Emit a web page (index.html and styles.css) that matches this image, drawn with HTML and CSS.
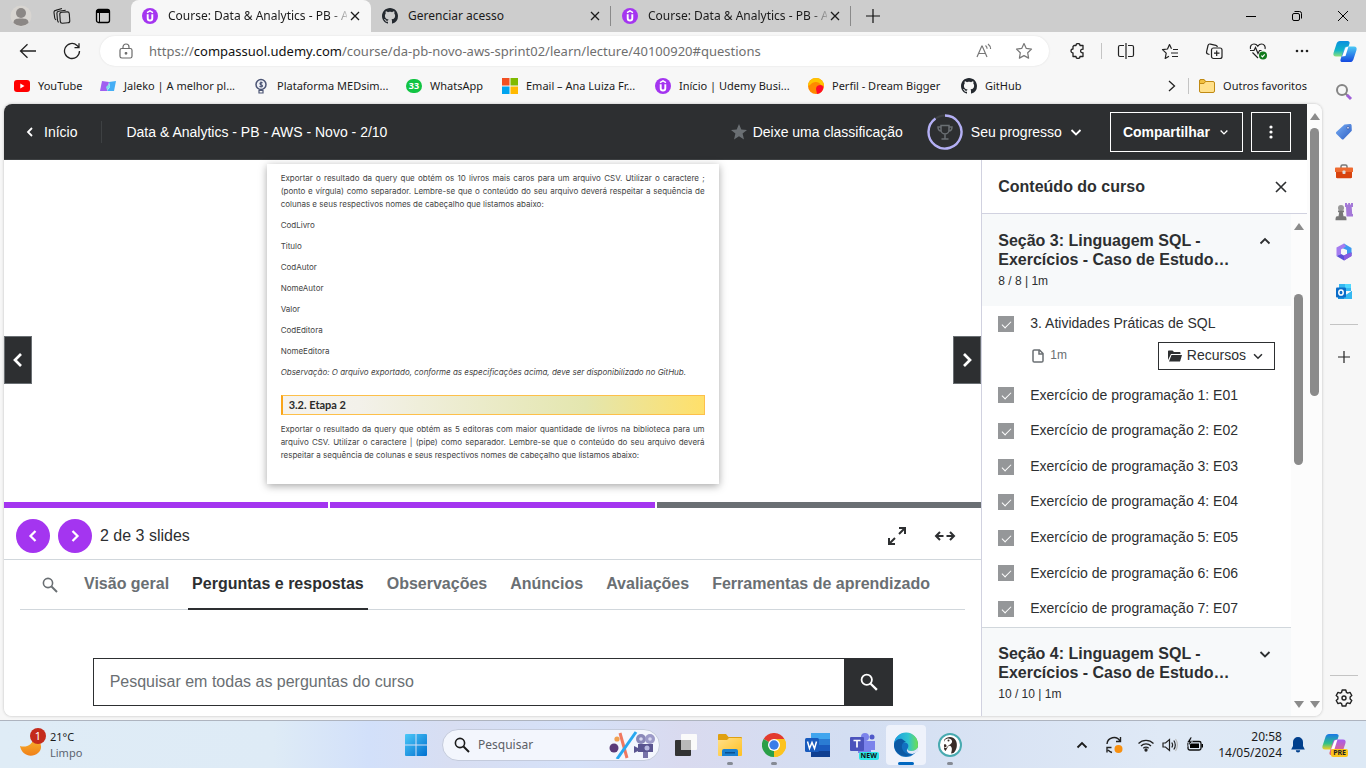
FILE: index.html
```html
<!DOCTYPE html>
<html lang="pt-BR">
<head>
<meta charset="utf-8">
<title>Course: Data &amp; Analytics - PB - AWS</title>
<link rel="stylesheet" href="styles.css">
</head>
<body>
<svg class="defs" aria-hidden="true">
  <defs>
    <linearGradient id="g-win" x1="0" y1="0" x2="1" y2="1"><stop offset="0" stop-color="#4cc8f8"/><stop offset="1" stop-color="#0070d0"/></linearGradient>
    <linearGradient id="g-cop1" x1="0" y1="0" x2="0" y2="1"><stop offset="0" stop-color="#0a8fe0"/><stop offset=".6" stop-color="#10b5c8"/><stop offset="1" stop-color="#8fe07a"/></linearGradient>
    <linearGradient id="g-cop2" x1="0" y1="0" x2="0" y2="1"><stop offset="0" stop-color="#4cc9f5"/><stop offset="1" stop-color="#1348e0"/></linearGradient>
    <linearGradient id="g-cop3" x1="0" y1="0" x2="0" y2="1"><stop offset="0" stop-color="#1a78e8"/><stop offset=".6" stop-color="#2fc08a"/><stop offset="1" stop-color="#f5d020"/></linearGradient>
    <linearGradient id="g-cop4" x1="0" y1="0" x2="0" y2="1"><stop offset="0" stop-color="#a65cf0"/><stop offset="1" stop-color="#f06a6a"/></linearGradient>
    <linearGradient id="g-tag" x1="0" y1="0" x2="1" y2="1"><stop offset="0" stop-color="#78aef5"/><stop offset="1" stop-color="#2f5fc4"/></linearGradient>
    <linearGradient id="g-edge" x1="0" y1="0" x2="1" y2="0"><stop offset="0" stop-color="#1a9be0"/><stop offset=".6" stop-color="#30c4d0"/><stop offset="1" stop-color="#6fe04e"/></linearGradient>
    <linearGradient id="g-moon" x1="0" y1="0" x2="0" y2="1"><stop offset="0" stop-color="#f8b830"/><stop offset="1" stop-color="#f08018"/></linearGradient>
    <linearGradient id="g-fold" x1="0" y1="0" x2="1" y2="1"><stop offset="0" stop-color="#ffe08a"/><stop offset="1" stop-color="#ffc020"/></linearGradient>
    <symbol id="i-udemy" viewBox="0 0 16 16"><circle cx="8" cy="8" r="8" fill="#a435f0"/><path d="M5 4.600 8 2.900l3 1.700" fill="none" stroke="#fff" stroke-width="1.500"/><path d="M5.700 6.300v3.900a2.300 2.300 0 0 0 4.600 0V6.300" fill="none" stroke="#fff" stroke-width="1.900"/></symbol>
    <symbol id="i-github" viewBox="0 0 16 16"><path fill="#24292f" d="M8 0C3.58 0 0 3.58 0 8c0 3.54 2.29 6.53 5.47 7.59.4.07.55-.17.55-.38 0-.19-.01-.82-.01-1.49-2.01.37-2.53-.49-2.69-.94-.09-.23-.48-.94-.82-1.13-.28-.15-.68-.52-.01-.53.63-.01 1.08.58 1.23.82.72 1.21 1.87.87 2.33.66.07-.52.28-.87.51-1.07-1.78-.2-3.64-.89-3.64-3.95 0-.87.31-1.59.82-2.15-.08-.2-.36-1.02.08-2.12 0 0 .67-.21 2.2.82.64-.18 1.32-.27 2-.27s1.36.09 2 .27c1.53-1.04 2.2-.82 2.2-.82.44 1.1.16 1.92.08 2.12.51.56.82 1.27.82 2.15 0 3.07-1.87 3.75-3.65 3.95.29.25.54.73.54 1.48 0 1.07-.01 1.93-.01 2.2 0 .21.15.46.55.38A8.01 8.01 0 0 0 16 8c0-4.42-3.58-8-8-8z"/></symbol>
    <symbol id="i-x" viewBox="0 0 16 16"><path d="m4 4 8 8m0-8-8 8" fill="none" stroke="currentColor" stroke-width="1.3"/></symbol>
    <symbol id="i-down" viewBox="0 0 16 16"><path d="m3.500 6 4.500 4.500L12.500 6" fill="none" stroke="currentColor" stroke-width="1.8"/></symbol>
    <symbol id="i-up" viewBox="0 0 16 16"><path d="m3.500 10.500 4.500-4.500 4.500 4.500" fill="none" stroke="currentColor" stroke-width="1.8"/></symbol>
    <symbol id="i-left" viewBox="0 0 16 16"><path d="M10 4 6 8l4 4" fill="none" stroke="currentColor" stroke-width="1.8"/></symbol>
    <symbol id="i-right" viewBox="0 0 16 16"><path d="m6 4 4 4-4 4" fill="none" stroke="currentColor" stroke-width="1.8"/></symbol>
    <symbol id="i-search" viewBox="0 0 16 16"><circle cx="6" cy="6" r="4.600" fill="none" stroke="currentColor" stroke-width="1.6"/><path d="m9.500 9.500 5.500 5.500" stroke="currentColor" stroke-width="2"/></symbol>
  </defs>
</svg>

<div class="tabstrip">
  <div class="tabstrip-tools">
    <button class="tool" aria-label="Perfil"><svg width="22" height="22" viewBox="0 0 22 22"><circle cx="11" cy="11" r="10.500" fill="#d8d5d1"/><circle cx="11" cy="8" r="5" fill="#8b8785"/><path d="M3.500 18c0-4 3-4.500 7.500-4.500s7.500.5 7.500 4.500a11 11 0 0 1-15 0z" fill="#8b8785"/></svg></button>
    <button class="tool" aria-label="Workspaces"><svg width="18" height="18" viewBox="0 0 18 18" fill="none" stroke="#1b1b1b" stroke-width="1.100"><rect x="7" y="5" width="9.500" height="11" rx="2" transform="rotate(-4 12 10)"/><path d="M4.500 13.500 3.900 6.300a2 2 0 0 1 1.800-2.100l7-.9M1.800 11.500 1 5.700A2 2 0 0 1 2.700 3.400L9 1.500M5.500 15.500l-1-2M3 13l-1.200-1.500"/></svg></button>
    <button class="tool" aria-label="Guias verticais"><svg width="16" height="16" viewBox="0 0 16 16"><rect x="1.500" y="1.500" width="13" height="13" rx="2" fill="none" stroke="#000" stroke-width="1.300"/><path d="M1.500 2h13v3h-13z"/><path d="M4.500 5v9.500" stroke="#000"/></svg></button>
  </div>
  <div class="tab tab-active">
    <svg class="ico16"><use href="#i-udemy"/></svg><span class="tab-title tab-fade">Course: Data &amp; Analytics - PB - A</span>
    <button class="tab-close" aria-label="Fechar guia"><svg class="ico16"><use href="#i-x"/></svg></button>
  </div>
  <div class="tab">
    <svg class="ico16"><use href="#i-github"/></svg><span class="tab-title">Gerenciar acesso</span>
    <button class="tab-close" aria-label="Fechar guia"><svg class="ico16"><use href="#i-x"/></svg></button>
  </div>
  <div class="tab">
    <svg class="ico16"><use href="#i-udemy"/></svg><span class="tab-title tab-fade">Course: Data &amp; Analytics - PB - A</span>
    <button class="tab-close" aria-label="Fechar guia"><svg class="ico16"><use href="#i-x"/></svg></button>
  </div>
  <button class="tool" aria-label="Nova guia"><svg width="16" height="16" viewBox="0 0 16 16"><path d="M8 1v14M1 8h14" stroke="#111" stroke-width="1.200"/></svg></button>
  <div class="win-controls">
    <button class="win-btn" aria-label="Minimizar"><svg width="12" height="12" viewBox="0 0 12 12"><path d="M1 6.500h10" stroke="#000"/></svg></button>
    <button class="win-btn" aria-label="Restaurar"><svg width="12" height="12" viewBox="0 0 12 12" fill="none" stroke="#000"><rect x="1.500" y="3.500" width="7" height="7" rx="1.500"/><path d="M3.500 1.500h5a2 2 0 0 1 2 2v5"/></svg></button>
    <button class="win-btn" aria-label="Fechar"><svg width="12" height="12" viewBox="0 0 12 12"><path d="m1 1 10 10m0-10L1 11" stroke="#000"/></svg></button>
  </div>
</div>

<div class="toolbar">
  <button class="tool" aria-label="Voltar"><svg width="18" height="16" viewBox="0 0 18 16" fill="none" stroke="#222" stroke-width="1.300"><path d="M17 8H2M8.500 1.200 1.500 8l7 6.800"/></svg></button>
  <button class="tool" aria-label="Atualizar"><svg width="18" height="18" viewBox="0 0 18 18" fill="none" stroke="#222" stroke-width="1.300"><path d="M16.500 9A7.500 7.500 0 1 1 14 3.400L16 5.500M16 1.200v4.500h-4.500"/></svg></button>
  <div class="address">
    <svg width="14" height="16" viewBox="0 0 14 16" fill="none" stroke="#6b6b6b" stroke-width="1.200"><rect x="1" y="5.500" width="12" height="9.500" rx="1.800"/><path d="M4 5.500V4a3 3 0 0 1 6 0v1.500"/><circle cx="7" cy="10.300" r=".8" fill="#6b6b6b"/></svg>
    <div class="url" role="textbox" aria-label="Endereço">https://<b>compassuol.udemy.com</b>/course/da-pb-novo-aws-sprint02/learn/lecture/40100920#questions</div>
    <button class="addr-btn" aria-label="Ler em voz alta"><svg width="16" height="16" viewBox="0 0 16 16" fill="none" stroke="#777" stroke-width="1.200"><path d="m1 14 4.800-11h.4L11 14M2.800 10.500h6.400M9.500 2.500c1 .8 1.600 1.900 1.600 3.200M12 1c1.600 1.200 2.600 3 2.600 5"/></svg></button>
    <button class="addr-btn" aria-label="Adicionar aos favoritos"><svg width="18" height="18" viewBox="0 0 18 18" fill="none" stroke="#777" stroke-width="1.200" stroke-linejoin="round"><path d="m9 1.500 2.300 4.900 5.200.7-3.800 3.700.9 5.300L9 13.600l-4.600 2.500.9-5.300L1.500 7.100l5.200-.7z"/></svg></button>
  </div>
  <button class="tool" aria-label="Extensões"><svg width="16" height="16" viewBox="0 0 16 16" fill="none" stroke="#222" stroke-width="1.300" stroke-linejoin="round"><path d="M5 2.500h2a2 2 0 0 1 4 0h3v3.800a1.800 1.800 0 1 0 0 3.400v3.800h-3a2 2 0 0 1-4 0H4V10a2 2 0 1 1 0-4V3.500z"/></svg></button>
  <i class="tool-sep"></i>
  <button class="tool" aria-label="Tela dividida"><svg width="18" height="16" viewBox="0 0 18 16" fill="none" stroke="#222" stroke-width="1.200"><path d="M7 2.500H3a1.500 1.500 0 0 0-1.500 1.500v8A1.500 1.500 0 0 0 3 13.500h4M11 2.500h4A1.500 1.500 0 0 1 16.500 4v8a1.500 1.500 0 0 1-1.500 1.500h-4M9 0v16"/></svg></button>
  <button class="tool" aria-label="Favoritos"><svg width="18" height="17" viewBox="0 0 18 17" fill="none" stroke="#222" stroke-width="1.200" stroke-linejoin="round"><path d="M10.500 5.800 8.500 1.500l-2 4.500L1.500 6.600l3.700 3.500-1 5.400 3.800-2.300M12 6.500h5M10 10h7M11 13.500h6"/></svg></button>
  <button class="tool" aria-label="Coleções"><svg width="18" height="18" viewBox="0 0 18 18" fill="none" stroke="#222" stroke-width="1.200"><rect x="6.500" y="6" width="10.500" height="10.500" rx="2"/><path d="M11.700 8.500v5.500M9 11.200h5.500M4.500 12.500 3 12a2 2 0 0 1-1.400-2.400L3 3.500a2 2 0 0 1 2.400-1.400l5.500 1.300a2 2 0 0 1 1.500 1.600"/></svg></button>
  <button class="tool" aria-label="Desempenho"><svg width="18" height="18" viewBox="0 0 18 18" fill="none" stroke="#222" stroke-width="1.200"><path d="M1.500 7C.8 4 2.500 2 5 2c1.800 0 3 1 3.800 2.200C9.600 3 10.800 2 12.600 2c2.600 0 4.200 2.500 3.400 5M1 8.500h4l1.500-3 2.500 6 1.500-3h2M3.500 10.500 9 16"/><circle cx="14" cy="13.500" r="4" fill="#117a1c" stroke="none"/><path d="m12.300 13.600 1.200 1.200 2.200-2.400" stroke="#fff"/></svg></button>
  <button class="tool" aria-label="Mais"><svg width="14" height="4" viewBox="0 0 14 4" fill="#222"><circle cx="2" cy="2" r="1.300"/><circle cx="7" cy="2" r="1.300"/><circle cx="12" cy="2" r="1.300"/></svg></button>
  <button class="tool" aria-label="Copilot"><svg width="24" height="23" viewBox="0 0 24 23"><path d="M7 1h7.500c1.500 0 2.500 1 2 2.600L13 14c-.5 1.700-1.500 2.500-3 2.500H3C.7 16.500 0 15 .5 13L3.600 3.600C4.200 2 5.300 1 7 1z" fill="url(#g-cop1)"/><path d="M17 22H9.500c-1.500 0-2.500-1-2-2.600L11 9c.5-1.700 1.500-2.500 3-2.500h7c2.300 0 3 1.500 2.500 3.500l-3.100 9.400C19.800 21 18.700 22 17 22z" fill="url(#g-cop2)"/><path d="m12.500 7.500 3-1-3 9.500-3.500.5z" fill="#fff"/></svg></button>
</div>

<div class="browser">
  <div class="browser-main">
    <nav class="bookmarks" aria-label="Favoritos">
      <a class="bm" href="#"><svg class="ico16" viewBox="0 0 16 16"><rect y="2" width="16" height="12" rx="3" fill="#f00"/><path d="m6.300 5.500 4.200 2.500-4.200 2.500z" fill="#fff"/></svg><span>YouTube</span></a>
      <a class="bm bm-long" href="#"><svg class="ico16" viewBox="0 0 16 16"><path d="m2 3 7 1-2 9-7 0z" fill="#a05ff0"/><path d="m9 4 7-1-2 10-7 0 3-4z" fill="#45aef5"/><path d="m6 9 3-3 1 3-3 3z" fill="#7de0e8"/></svg><span>Jaleko | A melhor pl...</span></a>
      <a class="bm bm-long" href="#"><svg class="ico16" viewBox="0 0 16 16"><circle cx="8" cy="6.500" r="5" fill="#eef0f6" stroke="#4c5575" stroke-width="1.500"/><path d="M9.500 5C8 3.800 6.300 5 7.300 6.200c.8.700 2.200.6 2.200 1.800-.2 1.300-2 1-3 .2M8 3.500v6M6 12.500h4v2.500H6z" fill="none" stroke="#4c5575" stroke-width="1.200"/></svg><span>Plataforma MEDsim...</span></a>
      <a class="bm bm-mid" href="#"><span class="wa">33</span><span>WhatsApp</span></a>
      <a class="bm bm-long" href="#"><svg class="ico16" viewBox="0 0 16 16"><path d="M0 0h7.500v7.500H0z" fill="#f25022"/><path d="M8.500 0H16v7.500H8.500z" fill="#7fba00"/><path d="M0 8.500h7.500V16H0z" fill="#00a4ef"/><path d="M8.500 8.500H16V16H8.500z" fill="#ffb900"/></svg><span>Email – Ana Luiza Fr...</span></a>
      <a class="bm bm-long" href="#"><svg class="ico16"><use href="#i-udemy"/></svg><span>Início | Udemy Busi...</span></a>
      <a class="bm bm-long" href="#"><svg class="ico16" viewBox="0 0 16 16"><circle cx="8" cy="8" r="8" fill="#ff8a00"/><path d="M0 8a8 8 0 0 1 16 0c-1-1-2-1-3-1-2-4-8-4-11 0z" fill="#ffc400"/><path d="M8 11a4 4 0 0 1 7.400-2A8 8 0 0 1 9 16z" fill="#ff0a2a"/></svg><span>Perfil - Dream Bigger</span></a>
      <a class="bm" href="#"><svg class="ico16"><use href="#i-github"/></svg><span>GitHub</span></a>
      <button class="bm-more" aria-label="Mais favoritos"><svg width="8" height="12" viewBox="0 0 8 12"><path d="m1 1 5.500 5L1 11" fill="none" stroke="#222" stroke-width="1.300"/></svg></button>
      <i class="tool-sep"></i>
      <a class="bm" href="#"><svg class="ico16" viewBox="0 0 16 16"><path d="M.5 3A1.500 1.500 0 0 1 2 1.500h3l1.500 2H14A1.500 1.500 0 0 1 15.500 5v8a1.500 1.500 0 0 1-1.500 1.500H2A1.500 1.500 0 0 1 .5 13z" fill="#ffe08a" stroke="#c08a14"/><path d="M.5 5.500V3A1.500 1.500 0 0 1 2 1.500h3l1.500 2-1.500 2z" fill="#f2c040" stroke="#c08a14"/></svg><span>Outros favoritos</span></a>
    </nav>

    <div class="viewport">
      <div class="page">
        <header class="course-head">
          <a class="home" href="#"><svg class="ico16"><use href="#i-left"/></svg>Início</a>
          <h1 class="course-title">Data &amp; Analytics - PB - AWS - Novo - 2/10</h1>
          <button class="head-link rate"><svg class="ico16" viewBox="0 0 16 16"><path d="m8 0 2.300 5.500 5.700.4-4.400 3.700L13 15.500l-5-3.200-5 3.200 1.400-5.900L0 5.900l5.700-.4z" fill="#6a6f73"/></svg>Deixe uma classificação</button>
          <button class="head-link progress-btn">
            <svg width="36" height="36" viewBox="0 0 36 36" fill="none"><circle cx="18" cy="18" r="16.500" stroke="#3e4143" stroke-width="2"/><path d="M18 1.500A16.500 16.500 0 1 1 8.500 4.500" stroke="#b4b0f5" stroke-width="2.400"/><path d="M14 11.500h8v4.500a4 4 0 0 1-8 0zM14 13h-3c0 2.500 1 4 3.500 4.300M22 13h3c0 2.500-1 4-3.500 4.300M18 20.500V25M14.500 25h7" stroke="#6a6f73" stroke-width="1.500"/></svg>
            Seu progresso<svg class="ico16 chev"><use href="#i-down"/></svg>
          </button>
          <button class="outline-btn">Compartilhar<svg class="ico12"><use href="#i-down"/></svg></button>
          <button class="outline-btn square" aria-label="Mais opções"><svg width="4" height="14" viewBox="0 0 4 14" fill="#fff"><circle cx="2" cy="2" r="1.600"/><circle cx="2" cy="7" r="1.600"/><circle cx="2" cy="12" r="1.600"/></svg></button>
        </header>

        <div class="columns">
          <main class="lesson">
            <section class="stage">
              <article class="slide">
                <p><span class="full">Exportar o resultado da query que obtém os 10 livros mais caros para um arquivo CSV. Utilizar o caractere ;</span> <span class="full">(ponto e vírgula) como separador. Lembre-se que o conteúdo do seu arquivo deverá respeitar a sequência de</span> colunas e seus respectivos nomes de cabeçalho que listamos abaixo:</p>
                <p>CodLivro</p>
                <p>Titulo</p>
                <p>CodAutor</p>
                <p>NomeAutor</p>
                <p>Valor</p>
                <p>CodEditora</p>
                <p>NomeEditora</p>
                <p><em>Observação: O arquivo exportado, conforme as especificações acima, deve ser disponibilizado no GitHub.</em></p>
                <h2>3.2. Etapa 2</h2>
                <p><span class="full">Exportar o resultado da query que obtém as 5 editoras com maior quantidade de livros na biblioteca para um</span> <span class="full">arquivo CSV. Utilizar o caractere | (pipe) como separador. Lembre-se que o conteúdo do seu arquivo deverá</span> respeitar a sequência de colunas e seus respectivos nomes de cabeçalho que listamos abaixo:</p>
              </article>
              <button class="stage-nav prev" aria-label="Aula anterior"><svg class="ico24"><use href="#i-left"/></svg></button>
              <button class="stage-nav next" aria-label="Próxima aula"><svg class="ico24"><use href="#i-right"/></svg></button>
            </section>
            <div class="steps"><i class="done"></i><i class="done"></i><i></i></div>
            <div class="slide-controls">
              <button class="round" aria-label="Slide anterior"><svg class="ico20"><use href="#i-left"/></svg></button>
              <button class="round" aria-label="Próximo slide"><svg class="ico20"><use href="#i-right"/></svg></button>
              <span class="count">2 de 3 slides</span>
              <button class="plain" aria-label="Tela cheia"><svg width="20" height="20" viewBox="0 0 20 20" fill="none" stroke="#2d2f31" stroke-width="2"><path d="M12 2h6v6M17.500 2.500 12 8M2 12v6h6M2.500 17.500 8 12"/></svg></button>
              <button class="plain" aria-label="Expandir visualização"><svg width="22" height="12" viewBox="0 0 22 12" fill="none" stroke="#2d2f31" stroke-width="2"><path d="M9.500 6H2M6 2 2 6l4 4M12.500 6H20M16 2l4 4-4 4"/></svg></button>
            </div>
            <nav class="tabs" aria-label="Seções do curso">
              <button class="tabs-search" aria-label="Pesquisar"><svg class="ico16"><use href="#i-search"/></svg></button>
              <button class="tabs-item">Visão geral</button>
              <button class="tabs-item current">Perguntas e respostas</button>
              <button class="tabs-item">Observações</button>
              <button class="tabs-item">Anúncios</button>
              <button class="tabs-item">Avaliações</button>
              <button class="tabs-item">Ferramentas de aprendizado</button>
            </nav>
            <form class="ask">
              <input type="search" aria-label="Pesquisar perguntas" placeholder="Pesquisar em todas as perguntas do curso">
              <button type="button" aria-label="Enviar pesquisa"><svg class="ico18"><use href="#i-search"/></svg></button>
            </form>
          </main>

          <aside class="contents">
            <div class="contents-head"><h2>Conteúdo do curso</h2><button class="plain" aria-label="Fechar"><svg class="ico20"><use href="#i-x"/></svg></button></div>
            <div class="contents-body">
              <div class="contents-list">
                <button class="section-head"><span class="section-name">Seção 3: Linguagem SQL - Exercícios - Caso de Estudo…</span><svg class="ico16"><use href="#i-up"/></svg><span class="section-meta">8 / 8 | 1m</span></button>
                <ul class="lectures">
                  <li><input type="checkbox" id="l0" checked><label for="l0">3. Atividades Práticas de SQL</label>
                    <div class="lecture-meta"><svg width="12" height="14" viewBox="0 0 12 14" fill="none" stroke="#6a6f73" stroke-width="1.500"><path d="M7.500 1H2.300A1.300 1.300 0 0 0 1 2.300v9.400A1.300 1.300 0 0 0 2.300 13h7.400a1.300 1.300 0 0 0 1.300-1.300V4.500zM7 1v4h4"/></svg><span>1m</span>
                      <button class="resources"><svg width="14" height="12" viewBox="0 0 14 12"><path d="M0 10V1.500C0 .7.500.5 1 .5h3.500L6 2h5.500c.6 0 1 .4 1 1v1H3z" fill="#2d2f31"/><path d="M3.500 5H14l-1.800 6c-.1.400-.4.500-.8.500H1z" fill="#2d2f31"/></svg>Recursos<svg class="ico14"><use href="#i-down"/></svg></button></div></li>
                  <li><input type="checkbox" id="l1" checked><label for="l1">Exercício de programação 1: E01</label></li>
                  <li><input type="checkbox" id="l2" checked><label for="l2">Exercício de programação 2: E02</label></li>
                  <li><input type="checkbox" id="l3" checked><label for="l3">Exercício de programação 3: E03</label></li>
                  <li><input type="checkbox" id="l4" checked><label for="l4">Exercício de programação 4: E04</label></li>
                  <li><input type="checkbox" id="l5" checked><label for="l5">Exercício de programação 5: E05</label></li>
                  <li><input type="checkbox" id="l6" checked><label for="l6">Exercício de programação 6: E06</label></li>
                  <li><input type="checkbox" id="l7" checked><label for="l7">Exercício de programação 7: E07</label></li>
                </ul>
                <button class="section-head"><span class="section-name">Seção 4: Linguagem SQL - Exercícios - Caso de Estudo…</span><svg class="ico16"><use href="#i-down"/></svg><span class="section-meta">10 / 10 | 1m</span></button>
              </div>
              <div class="scroll scroll-list"><i class="arrow up"></i><i class="before"></i><i class="thumb"></i><i class="after"></i><i class="arrow down"></i></div>
            </div>
          </aside>
        </div>
      </div>
      <div class="scroll scroll-page"><i class="arrow up"></i><i class="thumb"></i><i class="after"></i><i class="arrow down"></i></div>
    </div>
  </div>

  <aside class="edge-side">
    <button aria-label="Pesquisar"><svg width="18" height="18" viewBox="0 0 18 18" fill="none"><circle cx="7" cy="7" r="5" stroke="#858585" stroke-width="2"/><path d="m10.500 10.500 2 2" stroke="#858585" stroke-width="2"/><path d="m12 12 4 4" stroke="#a060d8" stroke-width="3"/></svg></button>
    <button aria-label="Compras"><svg width="18" height="18" viewBox="0 0 18 18"><path d="M9.500 1.500 15 1c1 0 1.500.5 1.600 1.500l.2 5.200-8 8.300c-.7.700-1.500.7-2.200 0L1.500 11c-.7-.7-.7-1.500 0-2.200z" fill="url(#g-tag)"/><circle cx="13" cy="4.800" r="1.300" fill="#eef" stroke="#2a50a0" stroke-width=".7"/></svg></button>
    <button aria-label="Ferramentas"><svg width="18" height="16" viewBox="0 0 18 16"><path d="M6 4V2.500C6 1.500 6.500 1 7.500 1h3c1 0 1.500.5 1.500 1.500V4" fill="none" stroke="#777" stroke-width="1.500"/><path d="M1 3.500h16c.6 0 1 .4 1 1V8H0V4.500c0-.6.400-1 1-1z" fill="#ee6a30"/><path d="M1 8h16v5c0 .8-.4 1.200-1.200 1.200H2.200c-.8 0-1.200-.4-1.200-1.200z" fill="#d8430e"/><rect x="7.500" y="6.500" width="3" height="3.500" rx=".8" fill="#ddd"/></svg></button>
    <button aria-label="Jogos"><svg width="18" height="18" viewBox="0 0 18 18"><path d="M10 0h2v1.500h1.200V0h1.800v1.500h1V0h2v4h-1.300l.5 7H18v2.500h-6.500L11 4h-1z" fill="#a478d8"/><circle cx="6" cy="5" r="3" fill="#999"/><path d="M3 7.500h6v1.800H7.800l.7 4H10c1 0 1.500 1 1.500 4H.5c0-3 .5-4 1.500-4h1.500l.7-4H3z" fill="#777"/></svg></button>
    <button aria-label="Microsoft 365"><svg width="18" height="18" viewBox="0 0 18 18"><path d="m9 .500 7.500 4.500v6L12 12V7L7 5z" fill="#3b9af0"/><path d="M9 .500 1.500 4.500v8.500L6 11V6.500l5-3z" fill="#a57cf0"/><path d="m1.500 13 7.500 4.500 7.500-4.500V9.500L12 11l-3 1.500L6 11z" fill="#5a4fd8"/><path d="m9 12.500 3-1.500 4.500-1.500V13L9 17.500z" fill="#8a5ce0"/></svg></button>
    <button aria-label="Outlook"><svg width="18" height="18" viewBox="0 0 18 18"><path d="M4 1h12v7H4z" fill="#35b8f1"/><path d="M10 1h6v4h-6z" fill="#50d9ff"/><path d="M3 8l7 5 7-5v8H3z" fill="#1490df"/><path d="m9 13 8-5v8H9z" fill="#35b8f1"/><rect x="1" y="4.500" width="10" height="10" rx="1" fill="#0a6cc8"/><ellipse cx="6" cy="9.500" rx="2.200" ry="2.600" fill="none" stroke="#fff" stroke-width="1.500"/></svg></button>
    <hr>
    <button aria-label="Adicionar"><svg width="14" height="14" viewBox="0 0 14 14"><path d="M7 1v12M1 7h12" stroke="#222" stroke-width="1.200"/></svg></button>
    <hr class="push">
    <button aria-label="Configurações"><svg width="18" height="18" viewBox="0 0 18 18" fill="none" stroke="#222" stroke-width="1.400" stroke-linejoin="round"><path d="M7.200 1h3.600l.6 2.300 1.300.8 2.300-.7 1.800 3.100L15.100 8v2l1.700 1.500-1.800 3.100-2.300-.7-1.300.8-.6 2.300H7.200l-.6-2.300-1.300-.8-2.300.7-1.800-3.100L2.900 10V8L1.200 6.500 3 3.400l2.300.7 1.300-.8z"/><circle cx="9" cy="9" r="2"/></svg></button>
  </aside>
</div>

<footer class="taskbar">
  <button class="weather">
    <span class="moon"><svg width="24" height="24" viewBox="0 0 24 24"><path d="M1 13c6 2 13-1 14-9 8 4 9 12 4 16-6 5-16 3-18-7z" fill="url(#g-moon)"/></svg><b>1</b></span>
    <span class="weather-text">21°C<small>Limpo</small></span>
  </button>
  <div class="apps">
    <button class="app" aria-label="Iniciar"><svg width="24" height="24" viewBox="0 0 24 24" fill="url(#g-win)"><path d="M1 2a1 1 0 0 1 1-1h9.500v10.500H1zM12.500 1H22a1 1 0 0 1 1 1v9.500H12.500zM1 12.500h10.500V23H2a1 1 0 0 1-1-1zM12.500 12.500H23V22a1 1 0 0 1-1 1h-9.500z"/></svg></button>
    <label class="os-search"><svg class="ico16"><use href="#i-search"/></svg><input type="text" aria-label="Pesquisar no Windows" placeholder="Pesquisar">
      <svg width="46" height="28" viewBox="0 0 46 28"><circle cx="5" cy="17" r="4.500" fill="#5a3a78"/><circle cx="8" cy="8" r="2.600" fill="#f0a050"/><path d="m11 2 7 25" stroke="#f07860" stroke-width="3"/><path d="M27 1 8 28" stroke="#28a8f0" stroke-width="3"/><circle cx="32" cy="8" r="5" fill="#8a88b8"/><circle cx="41" cy="8" r="5" fill="#9c9ac8"/><circle cx="32" cy="8" r="1.800" fill="#d8d8f0"/><circle cx="41" cy="8" r="1.800" fill="#d8d8f0"/><path d="M29 13h15v8H29zM25 15l4 2v3l-4 2z" fill="#5a5590"/><path d="M34 21h5v6h-5z" fill="#7773a8"/><circle cx="38" cy="17" r="2.500" fill="#b8b8e0"/></svg></label>
    <button class="app" aria-label="Visão de tarefas"><svg width="24" height="24" viewBox="0 0 24 24"><rect x="7" y="1" width="16" height="16" rx="1" fill="#fafafa"/><rect x="1" y="7" width="16" height="16" rx="1" fill="#333"/><path d="M7 7h10v10H7z" fill="#b8b8b8"/></svg></button>
    <button class="app open" aria-label="Explorador de Arquivos"><svg width="26" height="24" viewBox="0 0 26 24"><path d="M1 2a1 1 0 0 1 1-1h7l2.500 3H24a1 1 0 0 1 1 1v4H1z" fill="#e0a010"/><path d="M1 7h9l2-2h12a1 1 0 0 1 1 1v16a1 1 0 0 1-1 1H2a1 1 0 0 1-1-1z" fill="url(#g-fold)"/><path d="M5 23v-5a2 2 0 0 1 2-2h12a2 2 0 0 1 2 2v5z" fill="#1a80d0"/><path d="M8 19h10v1.500H8z" fill="#0a5090"/></svg></button>
    <button class="app open" aria-label="Chrome"><svg width="24" height="24" viewBox="0 0 24 24"><path d="M12 12 1.600 6A12 12 0 0 1 22.400 6z" fill="#e33b2e"/><path d="M12 12 22.400 6A12 12 0 0 1 12 24z" fill="#fcc31e"/><path d="M12 12v12A12 12 0 0 1 1.600 6z" fill="#2a9f48"/><path d="M12 6h10.400A12 12 0 0 1 12 24l5.200-9z" fill="#fcc31e"/><circle cx="12" cy="12" r="6" fill="#fff"/><circle cx="12" cy="12" r="4.700" fill="#3b7de8"/></svg></button>
    <button class="app" aria-label="Word"><svg width="26" height="24" viewBox="0 0 26 24"><rect x="6" width="19" height="24" rx="1.500" fill="#1b5bbe"/><path d="M6 0h19v6H6z" fill="#41a5ee"/><path d="M6 6h19v6H6z" fill="#2b7cd3"/><path d="M6 18h19v6H6z" fill="#103f91"/><rect y="5" width="14" height="14" rx="1.500" fill="#185abd"/><path d="m2.500 8.500 2 7 2.500-6 2.500 6 2-7" fill="none" stroke="#fff" stroke-width="1.500"/></svg></button>
    <button class="app" aria-label="Teams"><svg width="26" height="26" viewBox="0 0 26 26"><circle cx="16" cy="5" r="4" fill="#7b83eb"/><circle cx="23" cy="5" r="2.500" fill="#5059c9"/><path d="M9 9h13v12H9zM22 9h4v9h-4z" fill="#7b83eb"/><rect x="1" y="5" width="14" height="14" rx="1" fill="#4b53bc"/><path d="M4.500 8.500h7M8 8.500v7" stroke="#fff" stroke-width="1.700"/></svg><span class="new">NEW</span></button>
    <button class="app active" aria-label="Edge"><svg width="26" height="26" viewBox="0 0 26 26"><circle cx="13" cy="13" r="12" fill="#1270c0"/><path d="M1 12A12 12 0 0 1 25 13c0 4-3 6-6.500 6-3 0-4.500-1-4-2.500 2-2.500.5-6-3-6S1 8 1 12z" fill="url(#g-edge)"/><path d="M13 10c-4 0-5 4-3.500 7.500 1.500 3.500 6 6 10 4.500A12 12 0 0 1 1 14c0-5 4-8 8-7z" fill="#0c59a4"/><path d="M14.500 16.500c-.5 1.500 1 2.500 4 2.500 3 0 5-1.500 6-3.500l1 4-6 2.500c-4 0-7-3-5-5.500z" fill="#dfe8f8"/></svg></button>
    <button class="app open" aria-label="DBeaver"><svg width="24" height="26" viewBox="0 0 24 26"><circle cx="12" cy="13" r="11" fill="#fff" stroke="#48aab0" stroke-width="2"/><path d="M6 8c3-4 9-4 11.500 0 2.500 4 1.500 10-2 13l-2.500.5c1-3 1.500-6-.5-7.500-3-1-3 3-5 5-1.500-1-2-3-1-5z" fill="#3a2c28"/><path d="M6.500 8.500c2.500-3 7-2.500 7.500.5.500 2.500-2.500 3.500-4 5-1 1-1.500 2.500-3 2-1.500-1-1.500-5-.5-7.500z" fill="#fff"/><circle cx="10.500" cy="8.500" r="1" fill="#3a2c28"/><path d="M6 12.500c1.500-.5 2.500 0 2.500 1.500s-2 1.500-2.500.5z" fill="#3a2c28"/></svg></button>
  </div>
  <div class="tray">
    <button aria-label="Ícones ocultos"><svg class="ico16"><use href="#i-up"/></svg></button>
    <button aria-label="Atualização"><svg width="18" height="18" viewBox="0 0 18 18" fill="none" stroke="#222" stroke-width="1.400"><path d="M2 8a7 7 0 0 1 13-3M15.500 1v4.500H11M2 16.500v-5h4.500M3 14c1 1 2 2 4 2.500"/><circle cx="13.500" cy="13" r="4" fill="#f89010" stroke="none"/></svg></button>
    <button class="status" aria-label="Rede, som e bateria">
      <svg width="16" height="16" viewBox="0 0 16 16" fill="none" stroke="#222" stroke-width="1.300"><path d="M.5 6.500a10.500 10.500 0 0 1 15 0M3 9a7 7 0 0 1 10 0M5.300 11.300a4 4 0 0 1 5.400 0"/><circle cx="8" cy="13" r="1" fill="#222"/></svg>
      <svg width="16" height="16" viewBox="0 0 16 16" fill="none" stroke="#222" stroke-width="1.200"><path d="M1 6v4h2.500L7.500 13.500v-11L3.500 6zM9.800 5.500c1 1.500 1 3.500 0 5M11.800 3.500c2 2.500 2 6.500 0 9"/><path d="M13.500 2c2.500 3.500 2.500 8.500 0 12" stroke="#bbb"/></svg>
      <svg width="18" height="16" viewBox="0 0 18 16"><rect x="2" y="4.500" width="13" height="8.500" rx="1.800" fill="none" stroke="#111" stroke-width="1.300"/><path d="M4 6.500h9V11H4zM15.500 7h1.500v3.500h-1.500z"/><path d="M4.500 0 1 5.500h2.200L2 9.500l4.500-5.300H4.300L6 0z" stroke="#dfe9f6" stroke-width=".6"/></svg>
    </button>
    <button class="clock">20:58<br>14/05/2024</button>
    <button aria-label="Notificações"><svg width="14" height="16" viewBox="0 0 14 16" fill="#003f8c"><path d="M7 0a5 5 0 0 1 5 5v4l1.800 3.500H.2L2 9V5a5 5 0 0 1 5-5zM4.800 13.300h4.400a2.200 2.200 0 0 1-4.400 0z"/></svg></button>
    <button class="pre-btn" aria-label="Copilot"><svg width="24" height="23" viewBox="0 0 24 23"><path d="M7 1h7.500c1.500 0 2.500 1 2 2.600L13 14c-.5 1.700-1.500 2.500-3 2.500H3C.7 16.500 0 15 .5 13L3.600 3.600C4.200 2 5.300 1 7 1z" fill="url(#g-cop3)"/><path d="M17 22H9.500c-1.500 0-2.500-1-2-2.600L11 9c.5-1.700 1.500-2.500 3-2.500h7c2.300 0 3 1.500 2.500 3.500l-3.100 9.400C19.800 21 18.700 22 17 22z" fill="url(#g-cop4)"/><path d="m12.500 7.500 3-1-3 9.500-3.500.5z" fill="#fff"/></svg><span class="pre">PRE</span></button>
  </div>
</footer>
</body>
</html>
```

FILE: styles.css
```css
:root {
  --ui: "Noto Sans", "Open Sans", sans-serif;
  --page: "Liberation Sans", Arial, sans-serif;
  --ink: #2d2f31;
  --muted: #6a6f73;
  --line: #d1d2e0;
  --purple: #a435f0;
}

* { box-sizing: border-box; }

body {
  margin: 0;
  height: 100vh;
  display: flex;
  flex-direction: column;
  overflow: hidden;
  background: #f7f7f7;
  color: #1b1b1b;
  font: 12px/16px var(--ui);
}

button {
  display: flex;
  align-items: center;
  justify-content: center;
  margin: 0;
  padding: 0;
  border: 0;
  background: none;
  color: inherit;
  font: inherit;
}

a { color: inherit; text-decoration: none; }
h1, h2, p, ul { margin: 0; padding: 0; }
svg { flex: none; display: block; }

.defs { position: absolute; width: 0; height: 0; }
.ico12 { width: 12px; height: 12px; }
.ico14 { width: 14px; height: 14px; }
.ico16 { width: 16px; height: 16px; }
.ico18 { width: 18px; height: 18px; }
.ico20 { width: 20px; height: 20px; }
.ico24 { width: 24px; height: 24px; }

/* Tab strip */
.tabstrip { flex: none; display: flex; height: 32px; background: #cdcdcd; }
.tabstrip-tools { display: flex; width: 131px; }
.tool { flex: none; width: 44px; height: 100%; }
.tabstrip-tools .tool { width: 41px; }
.tab {
  position: relative;
  flex: 0 1 240px;
  min-width: 0;
  display: flex;
  align-items: center;
  gap: 10px;
  padding: 0 8px 0 11px;
}
.tab + .tab:not(.tab-active)::after {
  content: "";
  position: absolute;
  right: 0;
  top: 6px;
  height: 20px;
  border-right: 1px solid #8a8a8a;
}
.tab-active { background: #f7f7f7; border-radius: 8px 8px 0 0; }
.tab-title { flex: 1; min-width: 0; white-space: nowrap; }
.tab-fade {
  -webkit-mask-image: linear-gradient(90deg, #000 90%, rgba(0, 0, 0, .2));
  mask-image: linear-gradient(90deg, #000 90%, rgba(0, 0, 0, .2));
}
.tab-close { width: 16px; height: 16px; margin-left: -10px; }
.win-controls { display: flex; margin-left: auto; }
.win-btn { width: 46px; }

/* Toolbar */
.toolbar { flex: none; display: flex; align-items: center; height: 38px; padding-left: 6px; }
.toolbar .tool:last-child { width: 42px; }
.address {
  flex: 1;
  display: flex;
  align-items: center;
  height: 30px;
  margin: 0 6px;
  padding: 0 16px 0 19px;
  border-radius: 15px;
  background: #fff;
  box-shadow: 0 0 2px #ddd;
}
.url { flex: 1; margin-left: 16px; color: #6f6f6f; font-size: 13px; white-space: nowrap; }
.url b { color: #111; font-weight: 400; }
.addr-btn { width: 18px; margin-left: 22px; }
.tool-sep { flex: none; height: 16px; margin: 0 2px; border-right: 1px solid #c4c4c4; }

/* Browser body */
.browser { flex: 1; display: flex; min-height: 0; }
.browser-main { flex: 1; min-width: 0; display: flex; flex-direction: column; padding: 0 0 4px 4px; }
.bookmarks { flex: none; display: flex; align-items: center; gap: 16px; height: 34px; padding: 0 15px 2px 10px; }
.bookmarks .tool-sep { margin: 0 -6px 0 -4px; }
.bm { flex: none; display: flex; align-items: center; gap: 8px; min-width: 70px; white-space: nowrap; font-size: 11px; }
.bm-mid { width: 80px; }
.bm-long { width: 137px; }
.bm-more { margin-left: auto; }
.wa {
  width: 16px;
  height: 14px;
  border-radius: 7px;
  background: #12c443;
  color: #fff;
  font-size: 9px;
  font-weight: 700;
  line-height: 14px;
  text-align: center;
}

.edge-side { flex: none; width: 44px; display: flex; flex-direction: column; align-items: center; padding: 2px 0; }
.edge-side button { flex: none; width: 40px; height: 40px; }
.edge-side hr { width: 28px; margin: 12px 0; border: 0; border-top: 1px solid #c4c4c4; }
.edge-side .push { margin: auto 0 2px; }

.viewport {
  flex: 1;
  display: flex;
  min-height: 0;
  overflow: hidden;
  border-radius: 8px;
  background: #fcfcfc;
  box-shadow: 0 0 3px #bbb;
}
.page { flex: 1; min-width: 0; display: flex; flex-direction: column; background: #fff; color: var(--ink); font: 14px/20px var(--page); }

/* Simulated scrollbars */
.scroll { flex: none; display: flex; flex-direction: column; align-items: center; background: #fcfcfc; }
.scroll-page { width: 15px; }
.scroll-list { width: 16px; padding-right: 1px; }
.scroll .thumb { width: 9px; border-radius: 5px; background: #8b8b8b; }
.scroll .arrow { width: 24px; height: 24px; display: flex; align-items: center; justify-content: center; }
.scroll .arrow::after { content: ""; border: 5px solid transparent; border-top-width: 0; border-bottom: 7px solid #8b8b8b; }
.scroll .down::after { transform: rotate(180deg); }
.scroll-page .thumb { flex: 268; }
.scroll-page .after { flex: 296; }
.scroll-list .before { flex: 56; }
.scroll-list .thumb { flex: 171; }
.scroll-list .after { flex: 227; }

/* Course header */
.course-head {
  flex: none;
  display: flex;
  align-items: center;
  height: 56px;
  padding: 0 16px;
  background: var(--ink);
  border-bottom: 1px solid #3e4143;
  color: #fff;
}
.home { display: flex; align-items: center; gap: 6px; padding: 1px 24px 1px 2px; border-right: 1px solid #3e4143; }
.course-title { flex: 1; padding-left: 24px; font-size: 14px; font-weight: 400; }
.head-link { gap: 8px; margin-right: 26px; }
.rate { gap: 6px; margin-right: 24px; }
.chev { margin-left: -2px; }
.outline-btn { height: 40px; gap: 8px; padding: 0 12px; border: 1px solid #fff; font-weight: 700; }
.square { width: 40px; margin-left: 8px; padding: 0; }

/* Lesson column */
.columns { flex: 1; display: flex; min-height: 0; }
.lesson { flex: 1; min-width: 0; }
.stage { position: relative; display: flex; justify-content: center; padding: 4px 32px 18px; }
.slide {
  width: 452px;
  height: 320px;
  padding: 8px 14px;
  background: #fff;
  box-shadow: 0 2px 8px rgba(0, 0, 0, .35);
  color: #444;
  font: 8px/13px Inter, "Open Sans", sans-serif;
}
.slide p { margin-bottom: 8px; }
.slide .full { display: block; text-align-last: justify; white-space: nowrap; }
.slide h2 {
  margin: 16px 0 8px;
  padding-left: 6px;
  border: 1px solid #fdc04a;
  border-left: 2px solid #f9a51a;
  background: linear-gradient(90deg, #f5f3ef, #f3f1ea 18%, #e4e6ae 72%, #ffe06a);
  color: #2b2b2b;
  font: 700 11px/18px Lato, sans-serif;
}
.stage-nav {
  position: absolute;
  top: 176px;
  width: 28px;
  height: 48px;
  border: 1px solid #6a6f73;
  background: var(--ink);
  color: #fff;
}
.prev { left: 0; }
.next { right: 0; }
.steps { display: flex; gap: 2px; height: 6px; }
.steps i { flex: 1; background: var(--muted); }
.steps .done { background: var(--purple); }

.slide-controls {
  display: flex;
  align-items: center;
  gap: 8px;
  padding: 11px 24px 6px 12px;
  border-bottom: 1px solid #d1d7dc;
  font-size: 16px;
}
.round { width: 34px; height: 34px; border-radius: 50%; background: var(--purple); color: #fff; }
.count { flex: 1; }
.plain { width: 24px; height: 24px; }
.plain + .plain { margin-left: 16px; }

.tabs { display: flex; gap: 15px; margin: 0 16px; height: 50px; border-bottom: 1px solid #d1d7dc; color: var(--muted); }
.tabs-search { width: 29px; margin-left: 16px; padding-right: 2px; }
.tabs-item { flex: none; padding: 0 4px; border-bottom: 2px solid transparent; margin-bottom: -1px; font-size: 16px; font-weight: 700; }
.tabs .current { border-color: var(--ink); color: var(--ink); }

.ask { display: flex; max-width: 800px; height: 48px; margin: 48px auto 0; }
.ask input {
  flex: 1;
  min-width: 0;
  padding: 0 16px;
  border: 1px solid var(--ink);
  border-radius: 0;
  background: #fff;
  font: 16px/20px var(--page);
}
.ask input::placeholder { color: var(--muted); opacity: 1; }
.ask button { width: 48px; background: var(--ink); color: #fff; }

/* Course contents column */
.contents { flex: 0 0 25%; min-width: 0; display: flex; flex-direction: column; border-left: 1px solid var(--line); }
.contents-head {
  flex: none;
  display: flex;
  align-items: center;
  justify-content: space-between;
  height: 54px;
  padding: 0 14px 0 16px;
  border-bottom: 1px solid var(--line);
}
.contents-head h2 { font-size: 16px; }
.contents-body { flex: 1; display: flex; min-height: 0; }
.contents-list { flex: 1; min-width: 0; overflow: hidden; }
.section-head {
  display: grid;
  grid-template-columns: 1fr 20px;
  gap: 4px 24px;
  width: 100%;
  padding: 16px;
  border-top: 1px solid #d1d7dc;
  background: #f7f9fa;
  text-align: left;
  align-items: start;
}
.section-head svg { justify-self: center; margin-top: 2px; }
.section-head:first-child { border-color: transparent; }
.section-name { font-size: 16px; font-weight: 700; line-height: 19px; }
.section-meta { font-size: 12px; line-height: 17px; }
.lectures { list-style: none; line-height: 1.4; }
.lectures li { display: grid; grid-template-columns: 16px 1fr; gap: 8px 16px; align-items: center; padding: 8px 16px; }
.lectures input {
  appearance: none;
  display: flex;
  justify-content: center;
  width: 16px;
  height: 16px;
  margin: 0;
  background: #959799;
}
.lectures input::after {
  content: "";
  width: 4px;
  height: 8px;
  margin-top: 3px;
  border: solid #fff;
  border-width: 0 1px 1px 0;
  transform: rotate(45deg);
}
.lecture-meta { grid-column: 2; display: flex; align-items: center; gap: 6px; padding-left: 2px; color: var(--muted); font-size: 12px; }
.resources { gap: 5px; height: 28px; margin-left: auto; padding: 0 9px; border: 1px solid var(--ink); color: var(--ink); font-size: 14px; }

/* Taskbar */
.taskbar {
  flex: none;
  display: grid;
  grid-template-columns: 1fr auto 1fr;
  align-items: center;
  height: 48px;
  border-top: 1px solid #aeb4bf;
  background: linear-gradient(90deg, #dfecf6, #deebf6 20%, #d2e0fa 27%, #d8def2 33%, #d5e1f8 42%, #d9daef 50%, #d3def2 62%, #dfe9f6 85%, #dde9f5);
  font-size: 11px;
}
.weather { justify-self: start; gap: 7px; padding-left: 19px; text-align: left; }
.moon { position: relative; }
.moon b {
  position: absolute;
  top: -5px;
  right: -3px;
  width: 16px;
  height: 16px;
  border-radius: 50%;
  background: #c42b1c;
  color: #fff;
  font-weight: 400;
  text-align: center;
}
.weather-text small { display: block; color: #5c6470; font-size: 11px; }
.apps { display: flex; align-items: center; gap: 4px; }
.app { position: relative; width: 40px; height: 40px; }
.active { border-radius: 4px; background: #eef2fb; }
.open::after, .active::after {
  content: "";
  position: absolute;
  bottom: 0;
  width: 6px;
  height: 3px;
  border-radius: 2px;
  background: #858a94;
}
.active::after { width: 16px; background: #0067c0; }
.new {
  position: absolute;
  right: 3px;
  bottom: 5px;
  padding: 0 2px;
  border-radius: 2px;
  background: #2ce6e6;
  color: #111;
  font-size: 7px;
  font-weight: 700;
  line-height: 8px;
}
.os-search {
  display: flex;
  align-items: center;
  width: 218px;
  height: 32px;
  margin: 0 2px;
  padding: 0 4px 0 11px;
  border: 1px solid #c4cbdc;
  border-radius: 16px;
  background: #f3f6fd;
}
.os-search input { flex: 1; min-width: 0; margin-left: 8px; padding: 0; border: 0; background: none; font: 12px/16px var(--ui); }
.os-search input::placeholder { color: #5c6066; opacity: 1; }
.tray { justify-self: end; display: flex; align-items: center; padding-right: 20px; }
.tray button { min-width: 32px; height: 40px; }
.tray .status { gap: 8px; padding: 0 8px; }
.tray .clock { display: block; padding-left: 6px; text-align: right; font-size: 12px; line-height: 16px; }
.tray .pre-btn { position: relative; margin-left: 8px; width: 24px; min-width: 24px; }
.pre { position: absolute; right: -2px; bottom: 8px; padding: 0 2px; border-radius: 2px; background: #fcc41c; color: #222; font-size: 7px; font-weight: 700; line-height: 8px; }
```
